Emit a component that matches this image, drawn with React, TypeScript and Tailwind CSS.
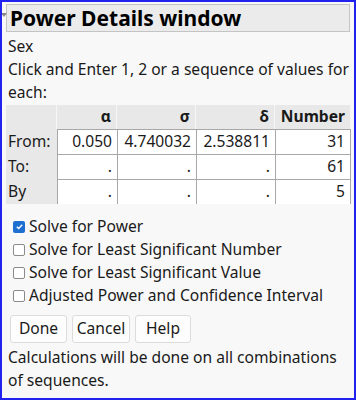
const FONT = { fontFamily: '"Noto Sans", "Open Sans", sans-serif' }

const COLS = ['α', 'σ', 'δ', 'Number']

const ROWS: { label: string; cells: string[] }[] = [
  { label: 'From:', cells: ['0.050', '4.740032', '2.538811', '31'] },
  { label: 'To:', cells: ['.', '.', '.', '61'] },
  { label: 'By', cells: ['.', '.', '.', '5'] },
]

const OPTIONS = [
  { label: 'Solve for Power', checked: true },
  { label: 'Solve for Least Significant Number', checked: false },
  { label: 'Solve for Least Significant Value', checked: false },
  { label: 'Adjusted Power and Confidence Interval', checked: false },
]

const BUTTONS = [
  { label: 'Done', cls: 'w-[57px]' },
  { label: 'Cancel', cls: 'w-[58px]' },
  { label: 'Help', cls: 'w-[56px]' },
]

function Check({ checked }: { checked: boolean }) {
  if (checked) {
    return (
      <span className="flex h-[12px] w-[12px] items-center justify-center rounded-[2px] bg-[#1f6fd0]">
        <svg width="9" height="9" viewBox="0 0 10 10">
          <path d="M2 5.2 L4.1 7.2 L8 3" fill="none" stroke="white" strokeWidth="1.5" />
        </svg>
      </span>
    )
  }
  return <span className="h-[12px] w-[12px] rounded-[2px] border border-[#8a8a8a] bg-white" />
}

export default function App() {
  return (
    <div style={FONT} className="h-[400px] w-[356px] overflow-hidden border-2 border-[#2222ee] bg-[#f8f8f8] text-[15.6px] text-[#1a1a1a]">
      <div className="relative">
        <span className="absolute left-[-1px] top-[9px] h-0 w-0 border-x-[3px] border-t-[4px] border-x-transparent border-t-[#888]" />
        <div className="mx-[4px] mt-[2px] flex h-[28px] items-center border border-[#c4c4c4] bg-[#ebebeb] pl-[3px] text-[21px] font-bold leading-none text-black">
          Power Details window
        </div>
      </div>
      <div className="pl-[6px] leading-[23px]">
        <div className="mt-[3px]">Sex</div>
        <div className="whitespace-nowrap">Click and Enter 1, 2 or a sequence of values for</div>
        <div>each:</div>
      </div>
      <div className="mx-[4px] mt-[1px] grid grid-cols-[51px_60px_79px_79px_76px] bg-[#e8e8e8]">
        <div className="h-[24px] border-r border-[#f6f6f6]" />
        {COLS.map((c) => (
          <div key={c} className="flex h-[24px] items-center justify-end border-r border-[#f6f6f6] pr-[5px] font-bold last:border-r-0">
            {c}
          </div>
        ))}
        {ROWS.map((r) => (
          <div key={r.label} className="contents">
            <div className="flex h-[25px] items-center border-t border-[#e8e8e8] pl-[2px]">{r.label}</div>
            {r.cells.map((v, i) => (
              <div key={i} className="flex h-[25px] items-center justify-end border-l border-t border-[#a8a8a8] bg-white pr-[5px] last:border-r">
                {v}
              </div>
            ))}
          </div>
        ))}
      </div>
      <div className="mt-[11px] flex flex-col px-[11px] leading-[23px]">
        {OPTIONS.map((o) => (
          <div key={o.label} className="flex items-center gap-[4px]">
            <Check checked={o.checked} />
            <span>{o.label}</span>
          </div>
        ))}
      </div>
      <div className="mt-[8px] flex gap-[5px] px-[8px]">
        {BUTTONS.map((b) => (
          <button
            key={b.label}
            className={`flex h-[28px] items-center justify-center rounded-[3px] border border-[#dcdcdc] bg-[#fdfdfd] ${b.cls}`}
          >
            {b.label}
          </button>
        ))}
      </div>
      <div className="mt-[3px] pl-[6px] leading-[23px]">
        <div className="whitespace-nowrap">Calculations will be done on all combinations</div>
        <div>of sequences.</div>
      </div>
    </div>
  )
}
